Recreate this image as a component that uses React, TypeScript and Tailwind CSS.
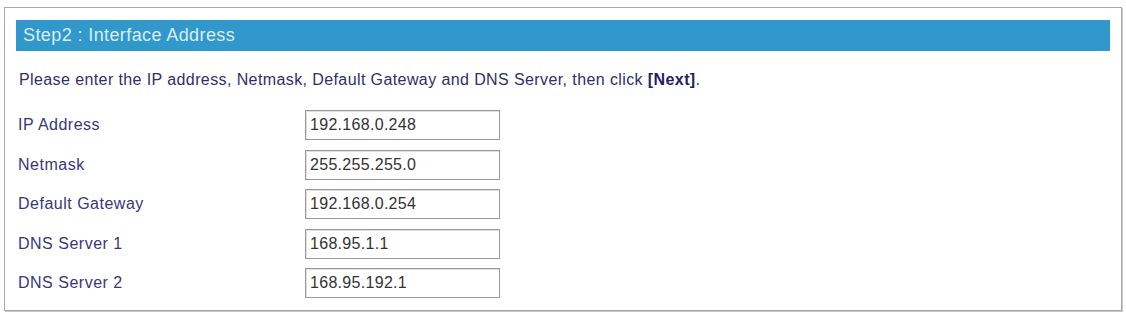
import React from "react";

const rows = [
  { label: "IP Address", value: "192.168.0.248" },
  { label: "Netmask", value: "255.255.255.0" },
  { label: "Default Gateway", value: "192.168.0.254" },
  { label: "DNS Server 1", value: "168.95.1.1" },
  { label: "DNS Server 2", value: "168.95.192.1" },
];

export default function App() {
  return (
    <div
      className="w-[1126px] h-[315px] bg-white pt-[7px] pl-[4px]"
      style={{ fontFamily: '"Liberation Sans", Arial, sans-serif' }}
    >
      <div className="w-[1118px] h-[304px] border border-[#a8a8a8] shadow-[1px_1px_0_#c8c8c8] flex flex-col">
        <div className="mx-[11px] mt-[12px] h-[31px] bg-[#3198cb] flex items-center pl-[7px]">
          <span className="text-[18px] tracking-[0.4px] text-[#d9eef8]">Step2 : Interface Address</span>
        </div>
        <div className="mt-[19px] pl-[14px] text-[16px] tracking-[0.4px] text-[#2f2f6a] leading-[20px]">
          Please enter the IP address, Netmask, Default Gateway and DNS Server, then click{" "}
          <span className="font-bold text-[#222266]">[Next]</span>.
        </div>
        <div className="mt-[20px] flex flex-col gap-[9.5px]">
          {rows.map((r) => (
            <div key={r.label} className="flex items-center h-[30px]">
              <div className="w-[300px] pl-[13px] text-[16px] tracking-[0.5px] text-[#37377c]">{r.label}</div>
              <div className="w-[195px] h-[30px] border border-[#9a9a9a] shadow-[inset_1px_1px_0_#e0e0e0] flex items-center pl-[4px] text-[16px] tracking-[0.3px] text-[#333333]">
                {r.value}
              </div>
            </div>
          ))}
        </div>
      </div>
    </div>
  );
}
